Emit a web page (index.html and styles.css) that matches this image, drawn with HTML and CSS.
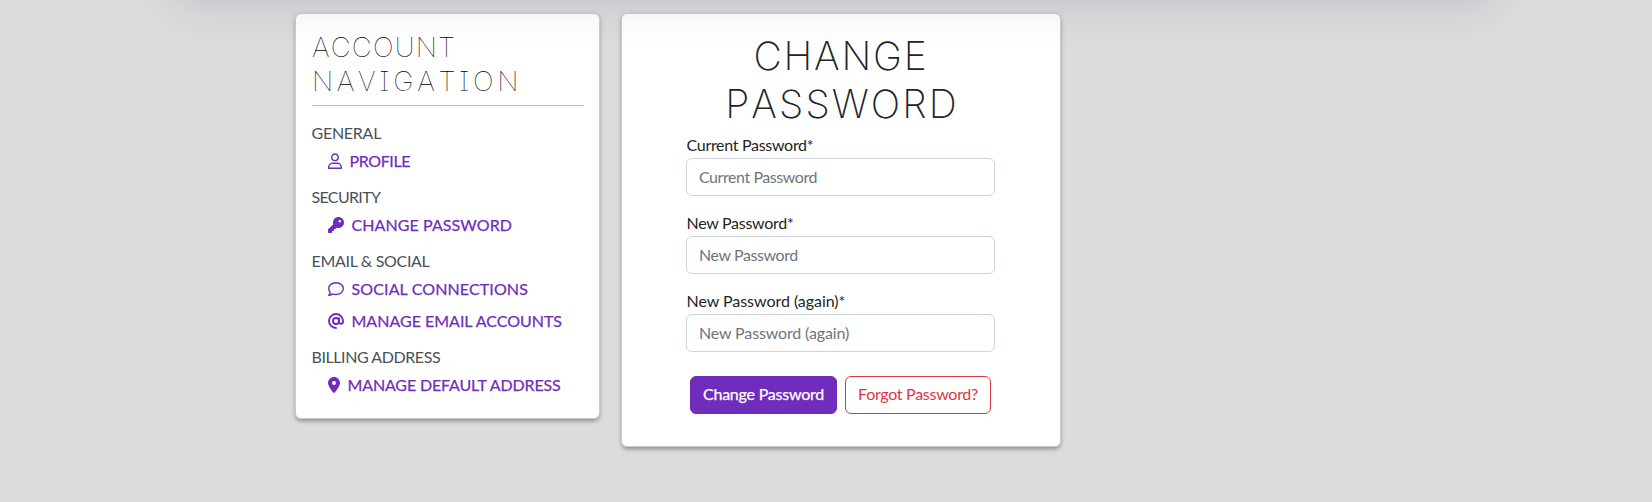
FILE: index.html
```
<!DOCTYPE html>
<html lang="en">
<head>
<meta charset="utf-8">
<title>Change Password</title>
<link rel="stylesheet" href="styles.css">
</head>
<body>
<div class="header-shadow"></div>
<main class="layout">
  <nav class="card side">
    <h2 class="side-title"><span class="word account">ACCOUNT</span><span class="word navigation">NAVIGATION</span></h2>
    <section class="group">
      <h3 class="label general">GENERAL</h3>
      <a class="link profile"><svg class="icon narrow" viewBox="0 0 14 16"><path d="M7 1a3.300 3.300 0 1 1 0 6.600a3.300 3.300 0 0 1 0-6.600zM.7 15.300v-1c0-2.300 1.800-4.100 4.100-4.100h4.400c2.300 0 4.100 1.800 4.100 4.100v1z" fill="none" stroke="currentColor" stroke-width="1.400" stroke-linejoin="round"/></svg><span>PROFILE</span></a>
    </section>
    <section class="group">
      <h3 class="label security">SECURITY</h3>
      <a class="link change"><svg class="icon" viewBox="0 0 512 512"><path fill="currentColor" d="M336 352c97.200 0 176-78.800 176-176S433.200 0 336 0S160 78.800 160 176c0 18.700 2.900 36.800 8.300 53.700L7 391c-4.500 4.500-7 10.600-7 17v80c0 13.300 10.700 24 24 24h80c13.300 0 24-10.700 24-24v-40h40c13.300 0 24-10.700 24-24v-40h40c6.400 0 12.500-2.500 17-7l33.300-33.300c16.900 5.400 35 8.300 53.700 8.300zM376 96a40 40 0 1 1 0 80a40 40 0 1 1 0-80z"/></svg><span>CHANGE PASSWORD</span></a>
    </section>
    <section class="group">
      <h3 class="label email">EMAIL &amp; SOCIAL</h3>
      <a class="link social"><svg class="icon" viewBox="0 0 16 16"><path d="M8 1.700c4.100 0 7.300 2.600 7.300 5.900s-3.200 5.900-7.300 5.900c-1.200 0-2.300-.2-3.300-.6-.9.700-2.300 1.400-4 1.400.8-.9 1.300-1.900 1.500-2.900C1.300 10.300.7 9 .7 7.600.700 4.300 3.900 1.700 8 1.700z" fill="none" stroke="currentColor" stroke-width="1.400" stroke-linejoin="round"/></svg><span>SOCIAL CONNECTIONS</span></a>
      <a class="link accounts"><svg class="icon" viewBox="0 0 16 16"><g fill="none" stroke="currentColor" stroke-width="1.900" stroke-linecap="round"><circle cx="8" cy="8" r="3"/><path d="M11 5.200v3.600a2 2 0 0 0 4 0V8a7 7 0 1 0-7 7"/></g></svg><span>MANAGE EMAIL ACCOUNTS</span></a>
    </section>
    <section class="group">
      <h3 class="label billing">BILLING ADDRESS</h3>
      <a class="link address"><svg class="icon pin" viewBox="0 0 384 512"><path fill="currentColor" d="M215.700 499.200C267 435 384 279.400 384 192C384 86 298 0 192 0S0 86 0 192c0 87.400 117 243 168.300 307.200c12.300 15.300 35.100 15.300 47.400 0zM192 128a64 64 0 1 1 0 128a64 64 0 1 1 0-128z"/></svg><span>MANAGE DEFAULT ADDRESS</span></a>
    </section>
  </nav>
  <section class="card main">
    <h1 class="title"><span class="word t-change">CHANGE</span><span class="word t-password">PASSWORD</span></h1>
    <form class="form">
      <label class="field"><span class="caption c1">Current Password*</span><input class="input i1" type="password" placeholder="Current Password"></label>
      <label class="field"><span class="caption c2">New Password*</span><input class="input i2" type="password" placeholder="New Password"></label>
      <label class="field"><span class="caption c3">New Password (again)*</span><input class="input i3" type="password" placeholder="New Password (again)"></label>
      <div class="actions"><button class="btn primary" type="button">Change Password</button><button class="btn danger" type="button">Forgot Password?</button></div>
    </form>
  </section>
</main>
</body>
</html>
```
FILE: styles.css
```
* { box-sizing: border-box; }
body { margin: 0; height: 502px; overflow: hidden; position: relative; background: #dcdcdc; color: #212529; font: 16px/24px Lato, sans-serif; }
.header-shadow { position: absolute; z-index: 2; left: 178px; right: 163px; top: -82px; height: 80px; box-shadow: 0 0 44px rgba(70, 50, 110, .22); pointer-events: none; }
.layout { display: flex; align-items: flex-start; gap: 21px; padding: 13px 0 0 295px; }
.card { background: #fff; border: 1px solid #cbcbcb; border-radius: 6px; box-shadow: 0 3px 4px -1px rgba(0, 0, 0, .3), 0 1px 6px rgba(0, 0, 0, .1); }
.side { width: 305px; height: 406px; padding: 15px 15px 15px 16px; }
.main { width: 440px; height: 434px; padding: 18px 64px; }
.word { display: block; height: 48px; }
.side-title { margin: 0 0 15px; padding: 1px 0 8px; border-bottom: 1px solid #bbb; font: 140 27.500px/34px Inter, sans-serif; font-feature-settings: "cv08"; font-kerning: none; height: 77px; color: #000; }
.side-title .word { height: 34px; }
.account { letter-spacing: 1.200px; }
.navigation { letter-spacing: 3.650px; }
.group { margin-bottom: 8px; }
.label { margin: 0 0 0 -.5px; font-size: 16px; font-weight: 400; line-height: 24px; color: #495057; }
.general { letter-spacing: -.26px; }
.security { letter-spacing: -.66px; }
.email { letter-spacing: -.32px; }
.billing { letter-spacing: -.42px; }
.link { display: flex; align-items: center; gap: 8px; height: 32px; padding-left: 15.500px; color: #6f2cbd; -webkit-text-stroke: .25px; }
.icon { width: 16px; height: 16px; flex: none; }
.narrow { width: 14px; }
.pin { width: 12px; }
.profile { letter-spacing: -.38px; }
.change { letter-spacing: .08px; }
.social { letter-spacing: .12px; }
.address { letter-spacing: -.15px; }
.title { margin: 0 0 5px; height: 96px; font: 200 39px/48px Inter, sans-serif; text-align: center; font-kerning: none; }
.t-change { letter-spacing: 1.800px; }
.t-password { letter-spacing: 2.100px; padding-left: 2px; }
.form { margin: 0; }
.field { display: block; margin-bottom: 16px; }
.field + .field { margin-top: -1px; }
.caption { display: block; height: 25px; padding-left: .5px; }
.c1 { letter-spacing: -.3px; }
.c2 { letter-spacing: -.28px; }
.c3 { letter-spacing: -.04px; }
.input { display: block; width: 309px; height: 38px; margin: 0; padding: 5px 12px 7px; border: 1px solid #ced4da; border-radius: 6px; font: inherit; background: #fff; }
.input::placeholder { color: #6c757d; opacity: 1; }
.i1 { letter-spacing: -.44px; }
.i2 { letter-spacing: -.42px; }
.i3 { letter-spacing: -.14px; }
.actions { display: flex; width: 309px; justify-content: center; gap: 8px; margin-top: 24px; }
.btn { height: 38px; padding: 0 0 2px; border: 1px solid; border-radius: 6px; font: inherit; white-space: nowrap; }
.primary { width: 147px; background: #6f2cbd; border-color: #6f2cbd; color: #fff; letter-spacing: -.22px; -webkit-text-stroke: .25px; }
.danger { width: 146px; background: #fff; color: #dc3545; letter-spacing: -.28px; }
```
